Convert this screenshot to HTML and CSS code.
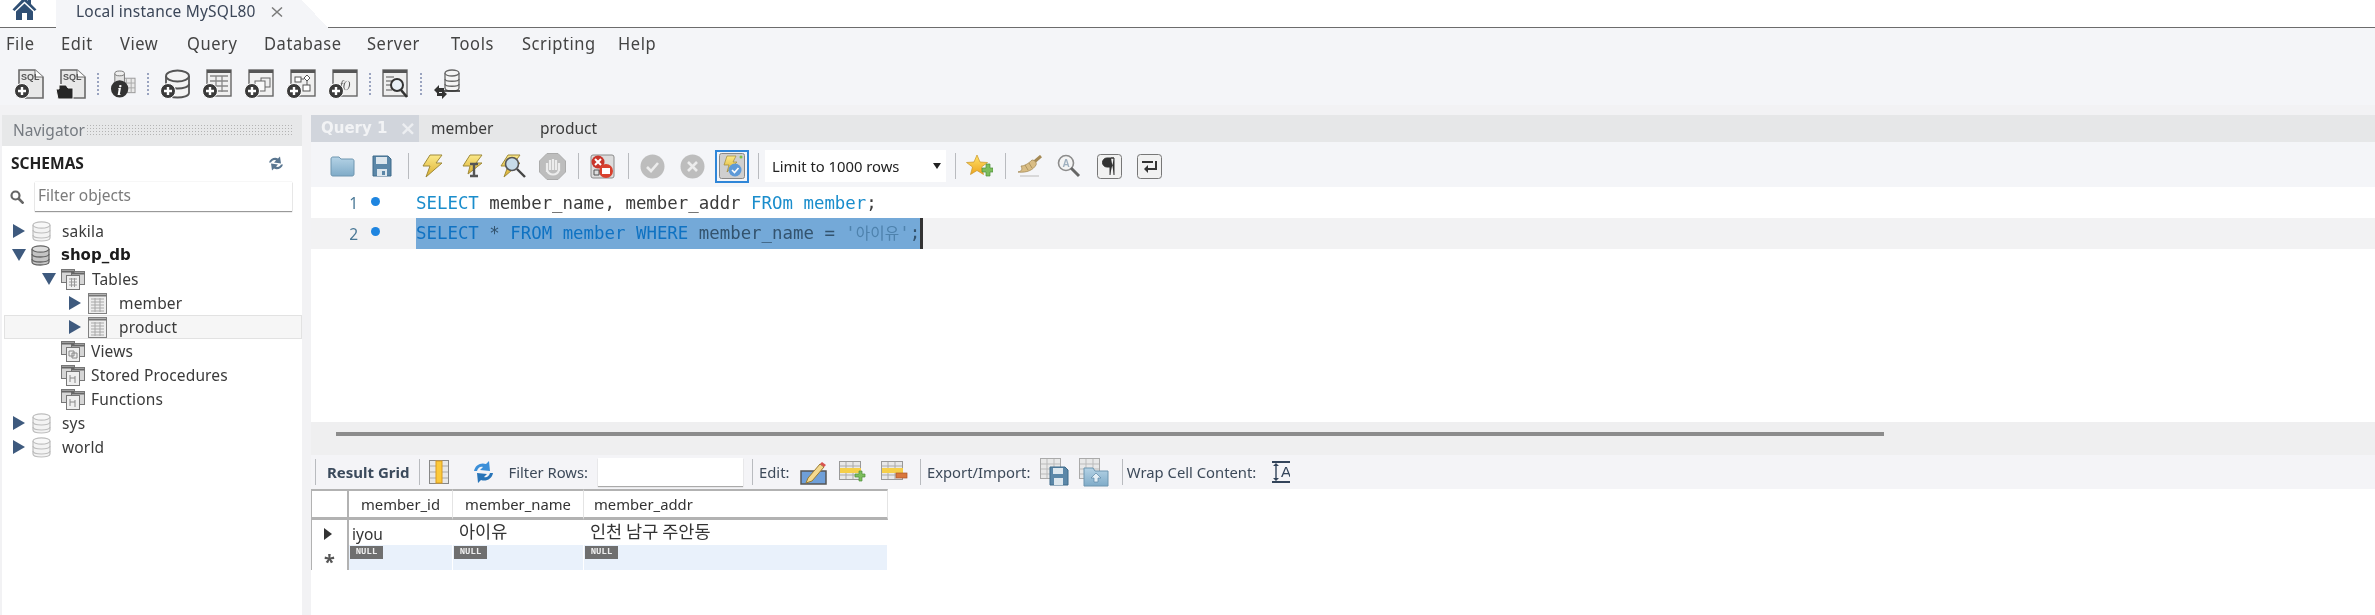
FILE: index.html
```html
<!DOCTYPE html>
<html lang="en">
<head>
<meta charset="utf-8">
<title>MySQL Workbench</title>
<link rel="stylesheet" href="styles.css">
</head>
<body>
<svg class="defs" width="0" height="0" aria-hidden="true">
  <defs>
    <linearGradient id="gBolt" x1="0" y1="0" x2="0" y2="1"><stop offset="0" stop-color="#fbe98a"/><stop offset="1" stop-color="#dcb030"/></linearGradient>
    <linearGradient id="gFolder" x1="0" y1="0" x2="0" y2="1"><stop offset="0" stop-color="#b5d3e6"/><stop offset="1" stop-color="#7fabc8"/></linearGradient>
    <linearGradient id="gStar" x1="0" y1="0" x2="0" y2="1"><stop offset="0" stop-color="#ffe36a"/><stop offset="1" stop-color="#eda51f"/></linearGradient>
    <g id="plus"><circle cx="8" cy="22" r="7.5" fill="#3a3a3a" stroke="#fff" stroke-width="1"/><path d="M4 22h8M8 18v8" stroke="#fff" stroke-width="2.4"/></g>
    <symbol id="i-home" viewBox="0 0 25 20"><path d="M12.5 -3 0.5 9.5 2.5 11 12.5 1.5 22.5 11 24.5 9.5 19 4V-1h-3v2z" fill="#2f4f74"/><path d="M4 11.5 12.5 3.5 21 11.5V20H15V13H10V20H4z" fill="#2f4f74"/></symbol>
    <symbol id="i-close" viewBox="0 0 12 10"><path d="M1 .5 11 9.5M11 .5 1 9.5" fill="none" stroke="#7c7c7c" stroke-width="1.5"/></symbol>
    <symbol id="i-sql" viewBox="0 0 30 30"><path d="M5 15V1h16l8 7v21H11" fill="#e8e8e8" stroke="#6a6a6a" stroke-width="1.6"/><path d="M21 1v7h8" fill="#fff" stroke="#6a6a6a"/><text x="7" y="11" class="svg-sql">SQL</text><use href="#plus"/></symbol>
    <symbol id="i-sql-open" viewBox="0 0 30 30"><path d="M5 15V1h16l8 7v21H11" fill="#e8e8e8" stroke="#6a6a6a" stroke-width="1.6"/><path d="M21 1v7h8" fill="#fff" stroke="#6a6a6a"/><text x="7" y="11" class="svg-sql">SQL</text><path d="M2 30 0 20h3v-4h7l2 3h5v11z" fill="#262626" stroke="#f4f4f4"/></symbol>
    <symbol id="i-info" viewBox="0 0 27 30"><rect x="12" y="9" width="14" height="15" fill="#e8e8e8" stroke="#999"/><path d="M12 14h14M12 19h14M17 9v15M22 9v15" stroke="#aaa"/><path d="M5 4v9c0 3 10 3 10 0V4" fill="#e4e4e4" stroke="#777"/><ellipse cx="10" cy="4" rx="5" ry="2.5" fill="#eee" stroke="#777"/><circle cx="10" cy="20" r="9" fill="#333"/><text x="7.5" y="26" class="svg-i">i</text></symbol>
    <symbol id="i-db-add" viewBox="0 0 30 30"><path d="M6 7v17c0 6 23 6 23 0V7" fill="#f4f4f4" stroke="#555" stroke-width="1.8"/><path d="M6 15c0 6 23 6 23 0" fill="none" stroke="#555" stroke-width="1.8"/><ellipse cx="17.5" cy="7" rx="11.5" ry="5.5" fill="#f4f4f4" stroke="#555" stroke-width="1.8"/><use href="#plus"/></symbol>
    <symbol id="i-table-add" viewBox="0 0 30 30"><rect x="5" y="1" width="24" height="26" fill="#f0f0f0" stroke="#666" stroke-width="1.4"/><rect x="5" y="1" width="24" height="3" fill="#555"/><path d="M8 7h18M8 12h18M8 17h18M8 22h18M14 7v16M20 7v16" stroke="#888" stroke-width="1.3"/><use href="#plus"/></symbol>
    <symbol id="i-view-add" viewBox="0 0 30 30"><rect x="5" y="1" width="24" height="26" fill="#f0f0f0" stroke="#666" stroke-width="1.4"/><rect x="5" y="1" width="24" height="3" fill="#555"/><rect x="17" y="9" width="9" height="9" fill="#eee" stroke="#666"/><rect x="11" y="12" width="10" height="10" fill="#f8f8f8" stroke="#666"/><use href="#plus"/></symbol>
    <symbol id="i-proc-add" viewBox="0 0 30 30"><rect x="5" y="1" width="24" height="26" fill="#f0f0f0" stroke="#666" stroke-width="1.4"/><rect x="5" y="1" width="24" height="3" fill="#555"/><rect x="9" y="8" width="6" height="5" fill="#fff" stroke="#555"/><path d="M21 6l3 3-3 3-3-3z" fill="#fff" stroke="#555"/><rect x="17" y="16" width="7" height="6" fill="#fff" stroke="#555"/><path d="M15 10h3M21 12v4" stroke="#555"/><use href="#plus"/></symbol>
    <symbol id="i-func-add" viewBox="0 0 30 30"><rect x="5" y="1" width="24" height="26" fill="#f0f0f0" stroke="#666" stroke-width="1.4"/><rect x="5" y="1" width="24" height="3" fill="#555"/><text x="12" y="19" class="svg-f">f()</text><use href="#plus"/></symbol>
    <symbol id="i-inspect" viewBox="0 0 27 30"><rect x="1" y="1" width="24" height="26" fill="#efefef" stroke="#666" stroke-width="1.4"/><rect x="1" y="1" width="24" height="3" fill="#555"/><path d="M4 8h8M4 12h6M4 16h5M4 21h6" stroke="#888" stroke-width="1.3"/><circle cx="15" cy="16" r="6" fill="#e9f0f6" stroke="#333" stroke-width="2"/><path d="M19 21l6 7" stroke="#333" stroke-width="2.6"/></symbol>
    <symbol id="i-sync" viewBox="0 0 28 30"><path d="M12 4v15c0 4 14 4 14 0V4" fill="#f4f4f4" stroke="#666" stroke-width="1.3"/><path d="M12 10c0 3 14 3 14 0M12 15c0 3 14 3 14 0" fill="none" stroke="#666" stroke-width="1.3"/><ellipse cx="19" cy="4" rx="7" ry="3" fill="#f4f4f4" stroke="#666" stroke-width="1.3"/><path d="M9 22h18" stroke="#333" stroke-width="1.6"/><path d="M1 21l5-5v3h5v4H6v3zM14 25l-5 5v-3H4v-3h5v-3z" fill="#333"/></symbol>

    <symbol id="i-folder" viewBox="0 0 25 22"><path d="M1 4c0-1.500 1-2 2-2h6l2 2h11c1.500 0 2 1 2 2v13c0 1.500-1 2-2 2H3c-1 0-2-.5-2-2z" fill="url(#gFolder)" stroke="#6f96b0"/></symbol>
    <symbol id="i-save" viewBox="0 0 20 22"><path d="M1 1h15l3 3v17H1z" fill="#5b87a8" stroke="#3f6a8a"/><rect x="4" y="2" width="11" height="7" fill="#dde7ee"/><rect x="5" y="14" width="10" height="7" fill="#dde7ee"/><rect x="10" y="16" width="3" height="4" fill="#5b87a8"/></symbol>
    <symbol id="i-bolt" viewBox="0 0 22 24"><path d="M9 1h12l-6 8h6L5 23l4-11H2z" fill="url(#gBolt)" stroke="#9f8a3a"/></symbol>
    <symbol id="i-bolt-i" viewBox="0 0 22 24"><path d="M9 1h12l-6 8h6L7 20l2-8H2z" fill="url(#gBolt)" stroke="#9f8a3a"/><path d="M9 10h8M13 10v11M9 22h8" stroke="#555" stroke-width="2.4"/></symbol>
    <symbol id="i-bolt-s" viewBox="0 0 27 24"><path d="M9 1h12l-6 8h6L5 23l4-11H2z" fill="url(#gBolt)" stroke="#9f8a3a"/><circle cx="13" cy="10" r="6.500" fill="#c7dbe8" stroke="#555" stroke-width="1.6"/><path d="M18 15l8 8" stroke="#444" stroke-width="2.4"/></symbol>
    <symbol id="i-stop" viewBox="0 0 27 27"><path d="M8 0.500h11l7.500 7.500v11l-7.500 7.500H8L.5 19V8z" fill="#bdbdbd" stroke="#ababab"/><path d="M8 19V10M11 17V7M14 17V6M17 17V7M20 18V10M8 17c2 6 10 6 12 0" stroke="#ececec" stroke-width="2.2" fill="none"/></symbol>
    <symbol id="i-red" viewBox="0 0 25 25"><rect x="1" y="1" width="23" height="23" rx="2" fill="#dcdcdc" stroke="#8a8a8a"/><circle cx="8" cy="8" r="6.500" fill="#c9352b"/><path d="M5 5l6 6M11 5l-6 6" stroke="#fff" stroke-width="2"/><circle cx="16" cy="17" r="7" fill="#d8402e"/><rect x="12" y="14" width="8" height="6" fill="#fff"/><path d="M4 16h5v5H4z" fill="none" stroke="#555"/></symbol>
    <symbol id="i-check" viewBox="0 0 25 25"><circle cx="12.500" cy="12.500" r="12" fill="#bdbdbd"/><path d="M7 13l4 4 7-8" fill="none" stroke="#ececec" stroke-width="2.6"/></symbol>
    <symbol id="i-cross" viewBox="0 0 25 25"><circle cx="12.500" cy="12.500" r="12" fill="#bdbdbd"/><path d="M8 8l9 9M17 8l-9 9" stroke="#ececec" stroke-width="2.6"/></symbol>
    <symbol id="i-toggle" viewBox="0 0 26 26"><rect x=".5" y=".5" width="25" height="25" rx="2" fill="#cfcfcf" stroke="#888"/><path d="M8 3h9l-3 6h4L8 19l2-7H5z" fill="url(#gBolt)" stroke="#9f8a3a" stroke-width=".7"/><circle cx="16" cy="17" r="6.500" fill="#5e9ad8"/><path d="M13 17l2.500 2.500 4-4.500" fill="none" stroke="#fff" stroke-width="1.600"/><circle cx="22" cy="4" r="1.500" fill="#7ac142"/></symbol>
    <symbol id="i-star" viewBox="0 0 27 22"><path d="M11 0l3 7 7.500.5-6 4.500 2 7.500L11 15.500 4.500 19.500l2-7.500-6-4.500L8 7z" fill="url(#gStar)" stroke="#c99526" stroke-width=".7"/><path d="M20 9h4v4h3v4h-3v4h-4v-4h-4v-4h4z" fill="#7cbd5c" stroke="#4f8f3a" stroke-width=".7"/></symbol>
    <symbol id="i-broom" viewBox="0 0 25 23"><path d="M24 1l-8 7" stroke="#a58a55" stroke-width="3"/><path d="M15 5c3 0 5 3 4 5-3 5-9 8-18 7 5-1 4-4 3-6 3 0 7-2 11-6z" fill="#d9bd85" stroke="#a58a55" stroke-width=".8"/><path d="M8 10l3 5M12 8l3 5" stroke="#a58a55" stroke-width=".8"/><path d="M3 21h19" stroke="#ccc" stroke-width="1.400"/></symbol>
    <symbol id="i-find" viewBox="0 0 24 24"><circle cx="9" cy="9" r="7.500" fill="#f4f4f4" stroke="#8c8c8c" stroke-width="1.600"/><text x="5.500" y="13" class="svg-a">A</text><path d="M14 14l8 8" stroke="#666" stroke-width="3"/></symbol>
    <symbol id="i-para" viewBox="0 0 25 25"><rect x=".5" y=".5" width="24" height="24" rx="3" fill="#f1f1f1" stroke="#777"/><path d="M17 4H10a4 4 0 0 0 0 9h3V21M14 4h3V21" fill="#333" stroke="#333"/></symbol>
    <symbol id="i-wrap" viewBox="0 0 25 25"><rect x=".5" y=".5" width="24" height="24" rx="3" fill="#f1f1f1" stroke="#777"/><path d="M5 8h11M19 7v8H9" fill="none" stroke="#333" stroke-width="2"/><path d="M11 11l-4 4 4 4z" fill="#333"/></symbol>

    <symbol id="i-db-nav" viewBox="0 0 19 21"><path d="M1 4v13c0 4 17 4 17 0V4" fill="#f3f3f3" stroke="#bdbdbd" stroke-width="1.200"/><path d="M1 9c0 4 17 4 17 0M1 14c0 4 17 4 17 0" fill="none" stroke="#bdbdbd" stroke-width="1.200"/><ellipse cx="9.500" cy="4" rx="8.500" ry="3.200" fill="#f8f8f8" stroke="#bdbdbd" stroke-width="1.200"/></symbol>
    <symbol id="i-db-active" viewBox="0 0 19 21"><path d="M1 4v13c0 4 17 4 17 0V4" fill="#c4c4c4" stroke="#666" stroke-width="1.300"/><path d="M1 9c0 4 17 4 17 0M1 14c0 4 17 4 17 0" fill="none" stroke="#666" stroke-width="1.300"/><ellipse cx="9.500" cy="4" rx="8.500" ry="3.200" fill="#dcdcdc" stroke="#666" stroke-width="1.300"/></symbol>
    <symbol id="i-group" viewBox="0 0 24 21"><rect x=".5" y=".5" width="13" height="13" fill="#d6d6d6" stroke="#777"/><rect x="10.500" y="2.500" width="13" height="13" fill="#d6d6d6" stroke="#777"/><rect x="5.500" y="6.500" width="13" height="14" fill="#efefef" stroke="#777"/><path d="M.5 2.500h13M10.500 4.500h13" stroke="#666" stroke-width="2"/><path d="M8 10h8M8 13h8M8 16h8M10.500 9v9M13.500 9v9" stroke="#999"/></symbol>
    <symbol id="i-group-v" viewBox="0 0 24 21"><rect x=".5" y=".5" width="13" height="13" fill="#d6d6d6" stroke="#777"/><rect x="10.500" y="2.500" width="13" height="13" fill="#d6d6d6" stroke="#777"/><rect x="5.500" y="6.500" width="13" height="14" fill="#efefef" stroke="#777"/><path d="M.5 2.500h13M10.500 4.500h13" stroke="#666" stroke-width="2"/><path d="M8 10h5v5H8zM11 12h5v5h-5z" fill="none" stroke="#888"/></symbol>
    <symbol id="i-group-p" viewBox="0 0 24 21"><rect x=".5" y=".5" width="13" height="13" fill="#d6d6d6" stroke="#777"/><rect x="10.500" y="2.500" width="13" height="13" fill="#d6d6d6" stroke="#777"/><rect x="5.500" y="6.500" width="13" height="14" fill="#efefef" stroke="#777"/><path d="M.5 2.500h13M10.500 4.500h13" stroke="#666" stroke-width="2"/><path d="M9 10v7M9 13h5M14 11v7" fill="none" stroke="#888"/></symbol>
    <symbol id="i-table" viewBox="0 0 19 21"><rect x=".5" y=".5" width="18" height="20" fill="#eee" stroke="#808080"/><path d="M.5 2.500h18" stroke="#777" stroke-width="2"/><path d="M3 6h13M3 9h13M3 12h13M3 15h13M3 18h13M7 5v14M12 5v14" stroke="#a8a8a8"/></symbol>
    <symbol id="i-refresh-dark" viewBox="0 0 18 16"><path d="M2 7c1-4 6-6 9-4l2-2 1 7-7-1 2-2c-2-1-4 0-5 2zM16 9c-1 4-6 6-9 4l-2 2-1-7 7 1-2 2c2 1 4 0 5-2z" fill="#5a7690"/></symbol>
    <symbol id="i-search" viewBox="0 0 14 14"><circle cx="5.500" cy="5.500" r="4" fill="none" stroke="#666" stroke-width="2.200"/><path d="M8.500 8.500l5 5" stroke="#666" stroke-width="2.600"/></symbol>

    <symbol id="i-grid-col" viewBox="0 0 20 24"><rect x=".5" y=".5" width="19" height="23" fill="#e8e8e8" stroke="#888"/><path d="M1 6h18M1 12h18M1 18h18" stroke="#aaa"/><rect x="7" y="1" width="6" height="22" fill="#fbc93a" stroke="#d99a20"/></symbol>
    <symbol id="i-refresh-blue" viewBox="0 0 23 24"><path d="M2 11C3 5 9 2 14 4l3-3 1 10-10-1 3-3c-3-1-5 1-6 4z" fill="#3c8fd8"/><path d="M21 13c-1 6-7 9-12 7l-3 3-1-10 10 1-3 3c3 1 5-1 6-4z" fill="#2874b8"/></symbol>
    <symbol id="i-edit" viewBox="0 0 27 25"><rect x="1" y="11" width="25" height="13" fill="#6f9fd8" stroke="#555" stroke-width="1.500"/><path d="M8 18 20 4l4 3L12 21l-6 2z" fill="#f3d98f" stroke="#9a7a30"/><path d="M20 4l2-2 4 3-2 2z" fill="#d9534f"/></symbol>
    <symbol id="i-row-add" viewBox="0 0 27 22"><rect x=".5" y=".5" width="21" height="18" fill="#e8e8e8" stroke="#999"/><path d="M1 5h20M1 14h20M7 1v17M14 1v17" stroke="#aaa"/><rect x="1" y="7" width="21" height="5" fill="#f5cf4a"/><path d="M20 10h3v3h3v3h-3v4h-3v-4h-4v-3h4z" fill="#7cbd5c" stroke="#4f8f3a" stroke-width=".7"/></symbol>
    <symbol id="i-row-del" viewBox="0 0 27 22"><rect x=".5" y=".5" width="21" height="18" fill="#e8e8e8" stroke="#999"/><path d="M1 5h20M1 14h20M7 1v17M14 1v17" stroke="#aaa"/><rect x="1" y="7" width="21" height="5" fill="#f5cf4a"/><rect x="15" y="12" width="11" height="5" fill="#d9773c" stroke="#a9552a" stroke-width=".7"/></symbol>
    <symbol id="i-exp" viewBox="0 0 29 28"><rect x=".5" y=".5" width="20" height="20" fill="#e8e8e8" stroke="#aaa"/><path d="M1 6h19M1 11h19M1 16h19M7 1v19M14 1v19" stroke="#bbb"/><path d="M10 9h15l3 3v15H10z" fill="#5b87a8" stroke="#3f6a8a"/><rect x="13" y="10" width="10" height="6" fill="#dde7ee"/><rect x="14" y="20" width="9" height="7" fill="#dde7ee"/></symbol>
    <symbol id="i-imp" viewBox="0 0 30 29"><rect x=".5" y=".5" width="20" height="20" fill="#e8e8e8" stroke="#aaa"/><path d="M1 6h19M1 11h19M1 16h19M7 1v19M14 1v19" stroke="#bbb"/><path d="M5 10h9l2 3h13v15H5z" fill="url(#gFolder)" stroke="#6f96b0"/><path d="M17 15l5 5h-3v4h-4v-4h-3z" fill="#e4eff6" stroke="#5d88a6" stroke-width=".7"/></symbol>
    <symbol id="i-wrapcell" viewBox="0 0 18 22"><path d="M0 1h18M0 21h18" stroke="#33445a" stroke-width="2"/><path d="M4 3v16" stroke="#33445a" stroke-width="1.400"/><path d="M1 5l3-3 3 3zM1 17l3 3 3-3z" fill="#33445a"/><text x="9" y="16" class="svg-wrap">A</text></symbol>
  </defs>
</svg>

<div class="app">
  <header class="titlebar">
    <svg class="home"><use href="#i-home"/></svg>
    <div class="conn-tab">
      <span class="conn-name">Local instance MySQL80</span>
      <svg class="conn-close"><use href="#i-close"/></svg>
    </div>
  </header>

  <nav class="menubar">
    <span class="menu-item w-file">File</span>
    <span class="menu-item w-edit">Edit</span>
    <span class="menu-item w-view">View</span>
    <span class="menu-item w-query">Query</span>
    <span class="menu-item w-database">Database</span>
    <span class="menu-item w-server">Server</span>
    <span class="menu-item w-tools">Tools</span>
    <span class="menu-item w-scripting">Scripting</span>
    <span class="menu-item">Help</span>
  </nav>

  <div class="main-toolbar">
    <svg class="ic30"><use href="#i-sql"/></svg>
    <svg class="ic30"><use href="#i-sql-open"/></svg>
    <i class="dots"></i>
    <svg class="ic26"><use href="#i-info"/></svg>
    <i class="dots"></i>
    <svg class="ic30"><use href="#i-db-add"/></svg>
    <svg class="ic30"><use href="#i-table-add"/></svg>
    <svg class="ic30"><use href="#i-view-add"/></svg>
    <svg class="ic30"><use href="#i-proc-add"/></svg>
    <svg class="ic30"><use href="#i-func-add"/></svg>
    <i class="dots"></i>
    <svg class="ic27"><use href="#i-inspect"/></svg>
    <i class="dots"></i>
    <svg class="ic28"><use href="#i-sync"/></svg>
  </div>

  <div class="workspace">
    <aside class="navigator">
      <div class="nav-head"><span class="nav-title">Navigator</span><span class="nav-dots"></span></div>
      <div class="schemas-head"><span class="schemas-title">SCHEMAS</span><svg class="schemas-refresh"><use href="#i-refresh-dark"/></svg></div>
      <div class="filter-row">
        <svg class="filter-icon"><use href="#i-search"/></svg>
        <div class="filter-input">Filter objects</div>
      </div>
      <ul class="tree">
        <li class="node lvl0"><i class="tri"></i><svg class="t-db"><use href="#i-db-nav"/></svg><span>sakila</span></li>
        <li class="node lvl0 active"><i class="tri open"></i><svg class="t-db"><use href="#i-db-active"/></svg><span>shop_db</span></li>
        <li class="node lvl1"><i class="tri open"></i><svg class="t-group"><use href="#i-group"/></svg><span>Tables</span></li>
        <li class="node lvl2"><i class="tri"></i><svg class="t-table"><use href="#i-table"/></svg><span>member</span></li>
        <li class="node lvl2 hover"><i class="tri"></i><svg class="t-table"><use href="#i-table"/></svg><span>product</span></li>
        <li class="node lvl1b"><svg class="t-group"><use href="#i-group-v"/></svg><span>Views</span></li>
        <li class="node lvl1b"><svg class="t-group"><use href="#i-group-p"/></svg><span>Stored Procedures</span></li>
        <li class="node lvl1b"><svg class="t-group"><use href="#i-group-p"/></svg><span>Functions</span></li>
        <li class="node lvl0"><i class="tri"></i><svg class="t-db"><use href="#i-db-nav"/></svg><span>sys</span></li>
        <li class="node lvl0"><i class="tri"></i><svg class="t-db"><use href="#i-db-nav"/></svg><span>world</span></li>
      </ul>
    </aside>

    <section class="pane">
      <div class="query-tabs">
        <div class="qtab active"><span>Query 1</span><span class="qtab-x">×</span></div>
        <div class="qtab w-member">member</div>
        <div class="qtab">product</div>
      </div>

      <div class="query-toolbar">
        <span class="slot"><svg class="s25-22"><use href="#i-folder"/></svg></span>
        <span class="slot"><svg class="s20-22"><use href="#i-save"/></svg></span>
        <i class="bar"></i>
        <span class="slot"><svg class="s22-24"><use href="#i-bolt"/></svg></span>
        <span class="slot"><svg class="s22-24"><use href="#i-bolt-i"/></svg></span>
        <span class="slot"><svg class="s27-24"><use href="#i-bolt-s"/></svg></span>
        <span class="slot"><svg class="s27-27"><use href="#i-stop"/></svg></span>
        <i class="bar"></i>
        <span class="slot"><svg class="s25-25"><use href="#i-red"/></svg></span>
        <i class="bar"></i>
        <span class="slot"><svg class="s25-25"><use href="#i-check"/></svg></span>
        <span class="slot"><svg class="s25-25"><use href="#i-cross"/></svg></span>
        <span class="slot"><span class="toggle-box"><svg class="s26-26"><use href="#i-toggle"/></svg></span></span>
        <i class="bar"></i>
        <div class="limit"><span>Limit to 1000 rows</span><i class="caret-down"></i></div>
        <i class="bar"></i>
        <span class="slot"><svg class="s27-22"><use href="#i-star"/></svg></span>
        <i class="bar"></i>
        <span class="slot"><svg class="s25-23"><use href="#i-broom"/></svg></span>
        <span class="slot"><svg class="s24-24"><use href="#i-find"/></svg></span>
        <span class="slot"><svg class="s25-25"><use href="#i-para"/></svg></span>
        <span class="slot"><svg class="s25-25"><use href="#i-wrap"/></svg></span>
      </div>

      <div class="editor">
        <div class="line">
          <span class="ln">1</span><i class="dot"></i>
          <code class="code"><b class="kw">SELECT</b> member_name, member_addr <b class="kw">FROm</b> <b class="tb">member</b>;</code>
        </div>
        <div class="line current">
          <span class="ln">2</span><i class="dot"></i>
          <code class="code sel"><b class="kw">SELECT</b> * <b class="kw">FROM</b> <b class="kw">member</b> <b class="kw">WHERE</b> member_name = <span class="str">'<span class="hangul">아이유</span>'</span>;</code>
        </div>
      </div>

      <div class="splitter"><div class="hscroll"></div></div>

      <div class="result-toolbar">
        <i class="bar"></i>
        <strong class="rt-title">Result Grid</strong>
        <i class="bar"></i>
        <svg class="s20-24"><use href="#i-grid-col"/></svg>
        <svg class="s23-24 gap-l"><use href="#i-refresh-blue"/></svg>
        <span class="rt-label m-filter">Filter Rows:</span>
        <div class="rt-input"></div>
        <i class="bar"></i>
        <span class="rt-label m-edit">Edit:</span>
        <svg class="s27-25 m-pencil"><use href="#i-edit"/></svg>
        <svg class="s27-22 m-row"><use href="#i-row-add"/></svg>
        <svg class="s27-22 m-rowdel"><use href="#i-row-del"/></svg>
        <i class="bar m-bar-exp"></i>
        <span class="rt-label m-export">Export/Import:</span>
        <svg class="s29-28"><use href="#i-exp"/></svg>
        <svg class="s30-29"><use href="#i-imp"/></svg>
        <i class="bar m-bar-wrap"></i>
        <span class="rt-label m-wraplabel">Wrap Cell Content:</span>
        <svg class="s18-22 m-wrap"><use href="#i-wrapcell"/></svg>
      </div>

      <div class="results">
        <div class="grid">
          <div class="hd rownum"></div>
          <div class="hd">member_id</div>
          <div class="hd">member_name</div>
          <div class="hd hd-left">member_addr</div>

          <div class="rownum"><i class="row-arrow"></i></div>
          <div class="cell cell-l">iyou</div>
          <div class="cell ko">아이유</div>
          <div class="cell ko">인천 남구 주안동</div>

          <div class="rownum"><span class="row-star">*</span></div>
          <div class="cell new"><span class="null">NULL</span></div>
          <div class="cell new"><span class="null">NULL</span></div>
          <div class="cell new"><span class="null">NULL</span></div>
        </div>
      </div>
    </section>
  </div>
</div>
</body>
</html>
```

FILE: styles.css
```css
* { box-sizing: border-box; }
html, body { margin: 0; padding: 0; background: #fff; }
body { width: 2375px; height: 615px; overflow: hidden; font-family: "Noto Sans", "Noto Sans CJK KR", sans-serif; color: #333; }
.defs { position: absolute; }
.app { width: 2375px; height: 615px; display: flex; flex-direction: column; overflow: hidden; filter: blur(.4px); background: #f4f5f8; }

.svg-sql { font: 700 9px "Liberation Sans", sans-serif; fill: #555; }
.svg-i { font: italic 700 16px "Liberation Serif", serif; fill: #fff; }
.svg-f { font: italic 11px "Liberation Serif", serif; fill: #555; }
.svg-a { font: 700 10px "Liberation Sans", sans-serif; fill: #9fb0bf; }
.svg-wrap { font: 15px "Liberation Sans", sans-serif; fill: #33445a; }

/* title bar */
.titlebar { height: 28px; flex: none; display: flex; background: #fff; border-bottom: 1px solid #6c6c6c; }
.home { width: 25px; height: 20px; margin-left: 12px; }
.conn-tab { width: 272px; height: 28px; margin-left: 19px; padding-left: 20px; display: flex; align-items: flex-start; background: linear-gradient(#f4f5f8, #f4f5f8) left top / 246px 100% no-repeat, linear-gradient(to top right, #f4f5f8 50%, transparent 50%) right top / 26px 100% no-repeat; }
.conn-name { font-size: 15.5px; line-height: 22px; color: #3b4658; letter-spacing: .2px; }
.conn-close { width: 12px; height: 10px; margin: 7px 0 0 15px; flex: none; }

/* menu: a strip of the toolbar colour overlaps the top of the labels, as in the capture */
.menubar { position: relative; height: 32px; flex: none; display: flex; padding: 6px 0 0 6px; background: #f4f5f8; }
.menubar::after { content: ""; position: absolute; left: 0; right: 0; top: 0; height: 8.5px; background: #f4f5f8; }
.menu-item { height: 18px; font-size: 16.5px; line-height: 18px; color: #444; letter-spacing: .55px; transform: scaleY(1.15); }
.w-file { width: 55px; } .w-edit { width: 59px; } .w-view { width: 67px; } .w-query { width: 77px; }
.w-database { width: 103px; } .w-server { width: 84px; } .w-tools { width: 71px; } .w-scripting { width: 96px; }

/* main toolbar */
.main-toolbar { height: 45px; flex: none; display: flex; align-items: flex-start; gap: 12px; padding: 9px 0 0 14px; background: #f4f5f8; }
.ic30 { width: 30px; height: 30px; }
.ic26 { width: 26px; height: 30px; }
.ic27 { width: 27px; height: 30px; }
.ic28 { width: 28px; height: 30px; }
.dots { width: 1px; height: 22px; margin: 4px -1px 0; border-left: 2px dotted #9aa4c0; }

/* workspace */
.workspace { flex: 1; min-height: 0; display: flex; padding: 10px 0 0 2px; background: #f2f2f4; }
.navigator { width: 300px; flex: none; background: #fff; }
.nav-head { height: 31px; display: flex; align-items: center; gap: 1px; padding: 0 8px 2px 11px; background: #e7e8e9; }
.nav-title { font-size: 15.5px; color: #757a80; }
.nav-dots { flex: 1; height: 12px; background-image: radial-gradient(#b4b4b4 .8px, transparent 1px); background-size: 3px 3px; }
.schemas-head { height: 36px; display: flex; align-items: center; justify-content: space-between; padding: 0 17px 2px 9px; }
.schemas-title { font-size: 15.5px; font-weight: 700; color: #222; }
.schemas-refresh { width: 18px; height: 17px; }
.filter-row { height: 29px; display: flex; align-items: center; padding-left: 8px; gap: 11px; }
.filter-icon { width: 14px; height: 14px; flex: none; }
.filter-input { width: 257px; height: 29px; padding-left: 3px; font-size: 15.5px; line-height: 27px; color: #7b7b7b; background: #fff; box-shadow: 0 1px 1px #999, 0 0 1px #ccc; }

.tree { list-style: none; margin: 8px 0 0; padding: 0; }
.node { height: 24px; display: flex; align-items: center; font-size: 15.5px; letter-spacing: .15px; color: #3a3a3a; white-space: nowrap; }
.lvl0 { padding-left: 11px; }
.lvl0 .tri { margin-right: 7px; }
.lvl0 .t-db { margin-right: 11px; }
.lvl1 { padding-left: 41px; }
.lvl1 .t-group { margin-right: 7px; }
.lvl1b .t-group { margin-right: 6px; }
.lvl1b { padding-left: 59px; }
.lvl2 { padding-left: 67px; }
.lvl2 .tri { margin-right: 7px; }
.lvl2 .t-table { margin-right: 12px; }
.active { font: 700 15px "DejaVu Sans", sans-serif; letter-spacing: 0; color: #1c1c1c; }
.hover { margin-left: 2px; padding-left: 65px; background: #f6f6f6; box-shadow: inset 0 0 0 1px #e2e2e2; }
.tri { width: 0; height: 0; flex: none; border-left: 12px solid #3e5a7e; border-top: 7px solid transparent; border-bottom: 7px solid transparent; }
.tri.open { border-top: 12px solid #3e5a7e; border-left: 7px solid transparent; border-right: 7px solid transparent; border-bottom: 0; margin-right: 5px; margin-left: -1px; }
.t-db { width: 19px; height: 21px; flex: none; }
.t-group { width: 24px; height: 21px; flex: none; }
.t-table { width: 19px; height: 21px; flex: none; }

/* right pane */
.pane { flex: 1; min-width: 0; margin-left: 9px; display: flex; flex-direction: column; }
.query-tabs { height: 27px; flex: none; display: flex; align-items: center; background: #e6e7e8; font-size: 15.5px; color: #3a3a3a; }
.qtab { padding-left: 12px; width: 110px; line-height: 27px; white-space: nowrap; }
.w-member { width: 109px; }
.qtab.active { width: 108px; height: 27px; padding-left: 10px; background: #d1d5dc; color: #f2f3f5; display: flex; gap: 12px; }
.qtab-x { font-size: 20px; color: #eceef1; }

.query-toolbar { height: 45px; flex: none; display: flex; align-items: center; padding: 3px 0 0 11px; background: #f4f5f8; }
.slot { width: 40px; flex: none; display: flex; align-items: center; justify-content: center; }
.bar { width: 1px; height: 26px; flex: none; margin: 0 3px 0 6px; background: #b9bbbf; }
.toggle-box { width: 34px; height: 33px; display: flex; align-items: center; justify-content: center; border: 2px solid #2f86d8; background: #f4f5f8; }
.limit { width: 181px; height: 32px; margin: 0 0 0 3px; padding: 0 5px 0 7px; flex: none; display: flex; align-items: center; justify-content: space-between; background: #fff; font-size: 14.8px; color: #222; }
.limit + .bar { margin-left: 9px; }
.caret-down { width: 0; height: 0; border-top: 6px solid #222; border-left: 4.5px solid transparent; border-right: 4.5px solid transparent; }
.s25-22 { width: 25px; height: 22px; } .s20-22 { width: 20px; height: 22px; } .s22-24 { width: 22px; height: 24px; }
.s27-24 { width: 27px; height: 24px; } .s27-27 { width: 27px; height: 27px; } .s25-25 { width: 25px; height: 25px; }
.s26-26 { width: 26px; height: 26px; } .s27-22 { width: 27px; height: 22px; flex: none; } .s25-23 { width: 25px; height: 23px; }
.s24-24 { width: 24px; height: 24px; } .s20-24 { width: 20px; height: 24px; flex: none; } .s23-24 { width: 23px; height: 24px; flex: none; }
.s27-25 { width: 27px; height: 25px; flex: none; } .s29-28 { width: 29px; height: 28px; flex: none; } .s30-29 { width: 30px; height: 29px; flex: none; }
.s18-22 { width: 18px; height: 22px; flex: none; }

/* editor */
.editor { height: 235px; flex: none; padding-top: 1px; background: #fff; }
.line { height: 30px; display: flex; align-items: center; }
.line.current { height: 31px; background: #f2f2f3; }
.ln { width: 47px; flex: none; text-align: right; font: 15.5px "Noto Sans", sans-serif; color: #4a7896; }
.dot { width: 9px; height: 9px; flex: none; margin: -4px 0 0 13px; border-radius: 50%; background: #1e85e0; }
.code { margin-left: 36px; height: 100%; display: block; font: 17.4px/30px "DejaVu Sans Mono", "Noto Sans CJK KR", monospace; color: #3c3c3c; white-space: pre; }
.code b { font-weight: 400; }
.kw, .tb { color: #1a8dcc; }
.sel { background: #74a9d8; border-right: 3px solid #333; color: #33536e; }
.sel .kw { color: #0f72c2; }
.str { color: #4e82ad; }
.hangul { font: 15.7px/30px "Noto Sans CJK KR", sans-serif; }

/* splitter */
.splitter { height: 33px; flex: none; padding: 10px 0 0 25px; background: #efeff0; }
.hscroll { width: 1548px; height: 4px; background: #8c8c8c; }

/* result toolbar */
.result-toolbar { height: 34px; flex: none; display: flex; align-items: center; gap: 10px; padding-left: 5px; background: #f4f4f7; font-size: 14.8px; color: #444; }
.result-toolbar .bar { margin: 0 -1px; }
.rt-title { font-weight: 700; color: #3b4a5c; font-size: 15px; margin-left: 2px; }
.rt-label { white-space: nowrap; color: #3d4a5a; }
.gap-l { margin-left: 13px; }
.m-filter { margin-left: 4px; }
.m-edit { margin-left: -3px; }
.m-pencil { margin-left: 1px; }
.m-row { margin-left: 2px; }
.m-rowdel { margin-left: 5px; }
.result-toolbar .m-bar-exp { margin-left: 2px; }
.m-export { margin-left: -3.5px; }
.result-toolbar .m-bar-wrap { margin-left: 3px; }
.m-wraplabel { margin-left: -5.5px; }
.m-wrap { margin-left: 6px; }
.rt-input { width: 145px; height: 28px; background: #fff; box-shadow: 0 1px 1px #aaa; }

/* grid */
.results { flex: 1; min-height: 0; background: #fff; }
.grid { width: 577px; display: grid; grid-template-columns: 38px 104px 131px 304px; grid-template-rows: 31px 25px 25px; font-size: 15px; color: #333; }
.hd { display: flex; align-items: center; justify-content: center; border-top: 2px solid #b2b2b2; border-bottom: 3px solid #b2b2b2; border-right: 1px solid #e4e4e4; background: #fff; font-size: 14.8px; }
.hd-left { justify-content: flex-start; padding-left: 10px; }
.hd.rownum { border-right: 2px solid #b2b2b2; border-left: 1px solid #b2b2b2; }
.rownum { display: flex; align-items: center; justify-content: center; border-right: 2px solid #b2b2b2; border-left: 1px solid #b2b2b2; background: #fff; }
.row-arrow { width: 0; height: 0; margin: 3px 4px 0 0; border-left: 8px solid #333; border-top: 6px solid transparent; border-bottom: 6px solid transparent; }
.row-star { font-size: 20px; line-height: 20px; font-weight: 700; color: #555; margin-top: 8px; }
.cell { padding-left: 3px; line-height: 25px; white-space: nowrap; }
.cell-l { font-size: 15.5px; padding-top: 2px; }
.ko { padding-left: 6px; font-family: "Noto Sans CJK KR", sans-serif; font-size: 17.5px; line-height: 22px; }
.new { padding: 1px 0 0 1px; background: #e9f1fb; border-right: 1px solid #fff; line-height: 12px; }
.null { display: block; width: 33px; height: 13px; background: #6f6f6f; color: #eee; font: 700 9px/12px "Liberation Mono", monospace; text-align: center; }
```
